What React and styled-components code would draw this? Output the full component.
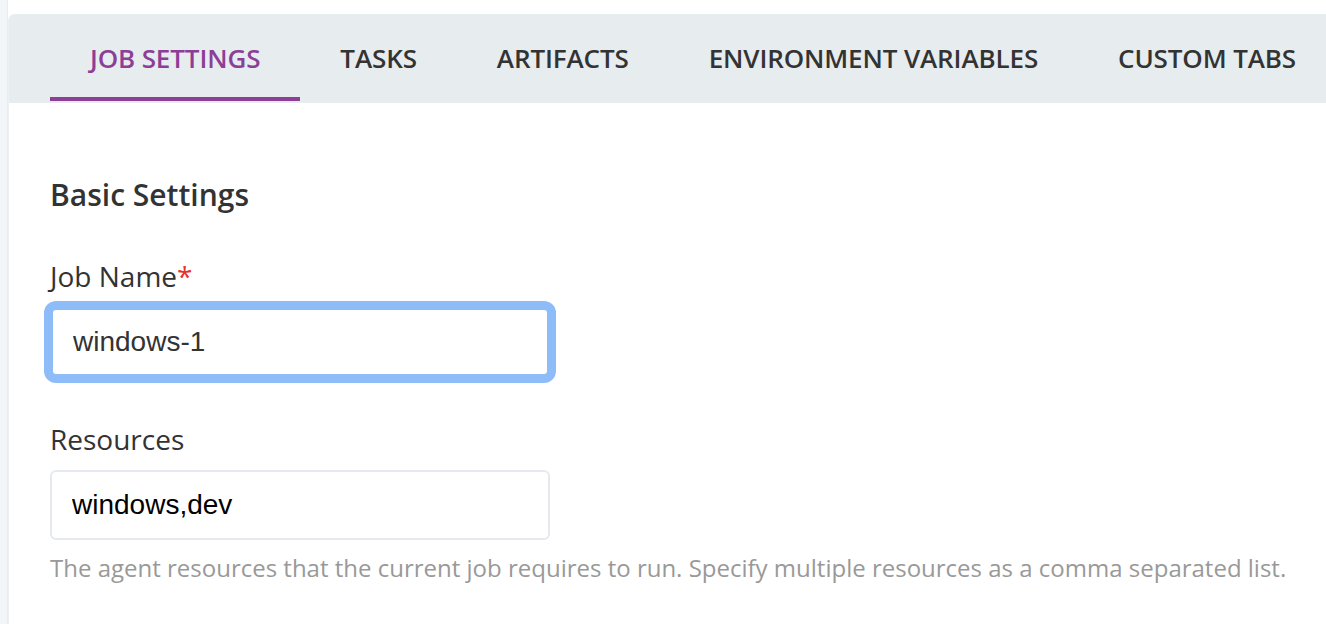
import React from "react";
import styled, { createGlobalStyle } from "styled-components";

const GlobalStyle = createGlobalStyle`
  html, body {
    margin: 0;
    padding: 0;
    background: #ffffff;
    overflow: hidden;
  }
  body {
    font-family: "Open Sans", "Liberation Sans", sans-serif;
    color: #333333;
  }
  * { box-sizing: border-box; }
`;

const Layout = styled.div`
  display: flex;
  width: 1326px;
  height: 624px;
  overflow: hidden;
`;

const Sidebar = styled.div`
  flex: 0 0 8px;
  background: #f3f6f8;
  border-right: 1px solid #e9edf0;
`;

const Main = styled.div`
  flex: 1 1 auto;
  padding-top: 14px;
  min-width: 0;
`;

const Panel = styled.div`
  width: 1400px;
  height: 100%;
  background: #ffffff;
  border-left: 1px solid #eef1f3;
  border-top-left-radius: 6px;
`;

const TabBar = styled.nav`
  display: flex;
  height: 89px;
  padding: 0 0 2px 41px;
  background: #e7ecef;
  border-top-left-radius: 6px;
`;

const Tab = styled.div`
  display: flex;
  align-items: center;
  padding: 4px 40px 0;
  font-size: 26px;
  font-weight: 600;
  letter-spacing: -0.12px;
  white-space: nowrap;
  color: ${(p) => (p.$active ? "#8d3e97" : "#333333")};
  border-bottom: 4px solid ${(p) => (p.$active ? "#8d3e97" : "transparent")};
`;

const Content = styled.div`
  padding: 0 0 0 41px;
`;

const SectionTitle = styled.h2`
  margin: 0;
  padding-top: 73px;
  font-size: 30px;
  line-height: 38px;
  font-weight: 600;
  color: #333333;
`;

const Field = styled.div`
  display: flex;
  flex-direction: column;
  margin-top: ${(p) => p.$top}px;
`;

const Label = styled.label`
  font-size: 28px;
  line-height: 38px;
  font-weight: 400;
  color: #333333;
  margin-bottom: ${(p) => p.$gap}px;
`;

const Required = styled.span`
  color: #e5322d;
`;

const Input = styled.input`
  width: 500px;
  height: 70px;
  padding: 0 20px;
  font-family: "Liberation Sans", Arial, sans-serif;
  font-size: 28px;
  color: ${(p) => (p.$focused ? "#333333" : "#000000")};
  background: #ffffff;
  border: ${(p) => (p.$focused ? "3px solid #8ebcf8" : "2px solid #e6eaee")};
  border-radius: 6px;
  box-shadow: ${(p) => (p.$focused ? "0 0 0 6px #8ebcf8" : "none")};
  outline: none;
`;

const Help = styled.p`
  margin: 12px 0 0;
  font-size: 24px;
  line-height: 32px;
  color: #999999;
  white-space: nowrap;
`;

const tabs = ["JOB SETTINGS", "TASKS", "ARTIFACTS", "ENVIRONMENT VARIABLES", "CUSTOM TABS"];

export default function App() {
  return (
    <>
      <GlobalStyle />
      <Layout>
        <Sidebar />
        <Main>
          <Panel>
            <TabBar>
              {tabs.map((t, i) => (
                <Tab key={t} $active={i === 0}>
                  {t}
                </Tab>
              ))}
            </TabBar>
            <Content>
              <SectionTitle>Basic Settings</SectionTitle>
              <Field $top={43}>
                <Label $gap={12}>
                  Job Name<Required>*</Required>
                </Label>
                <Input $focused defaultValue="windows-1" readOnly />
              </Field>
              <Field $top={43}>
                <Label $gap={12}>Resources</Label>
                <Input defaultValue="windows,dev" readOnly />
              </Field>
              <Help>
                The agent resources that the current job requires to run. Specify multiple resources as a comma separated list.
              </Help>
            </Content>
          </Panel>
        </Main>
      </Layout>
    </>
  );
}
